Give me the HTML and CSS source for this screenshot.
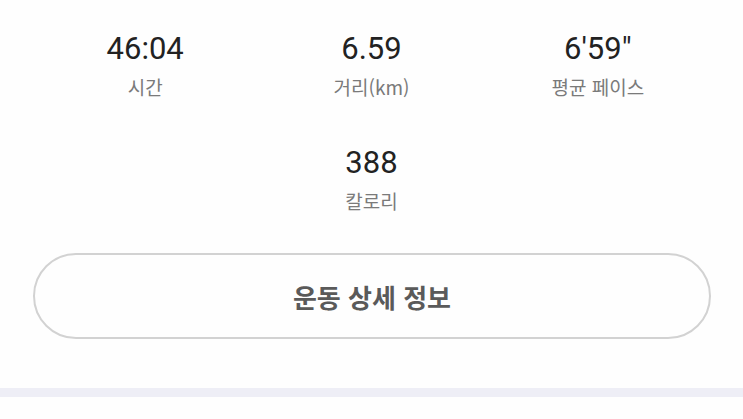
FILE: index.html
```html
<!DOCTYPE html>
<html lang="ko">
<head>
<meta charset="utf-8">
<link rel="stylesheet" href="styles.css">
</head>
<body>
<div class="summary">
  <div class="stats">
    <div class="stat">
      <div class="value">46:04</div>
      <div class="label">시간</div>
    </div>
    <div class="stat">
      <div class="value">6.59</div>
      <div class="label">거리(km)</div>
    </div>
    <div class="stat">
      <div class="value">6'59"</div>
      <div class="label">평균 페이스</div>
    </div>
    <div class="stat stat-center">
      <div class="value">388</div>
      <div class="label">칼로리</div>
    </div>
  </div>
  <button class="detail-btn" type="button">운동 상세 정보</button>
</div>
<div class="divider"></div>
</body>
</html>
```
FILE: styles.css
```css
html, body {
  margin: 0;
  padding: 0;
  background: #fefefe;
}
body {
  width: 743px;
  height: 419px;
  overflow: hidden;
  font-family: Roboto, "Noto Sans CJK KR", sans-serif;
}
.summary {
  padding: 31px 32px 0;
  height: 357px;
  box-sizing: border-box;
}
.stats {
  display: grid;
  grid-template-columns: repeat(3, 1fr);
  row-gap: 45px;
}
.stat {
  display: flex;
  flex-direction: column;
  align-items: center;
}
.stat-center {
  grid-column: 2;
}
.value {
  font-size: 31px;
  line-height: 36px;
  color: #222;
}
.label {
  margin-top: 7px;
  font-family: "Noto Sans CJK KR", sans-serif;
  font-size: 19px;
  line-height: 26px;
  color: #7a7a7a;
}
.detail-btn {
  display: block;
  margin: 39px 0 0 1px;
  width: 678px;
  height: 86px;
  border: 2px solid #d2d2d2;
  border-radius: 43px;
  background: #fefefe;
  font-family: "Noto Sans CJK KR", sans-serif;
  font-size: 26px;
  font-weight: 700;
  color: #5a5a5a;
  padding: 0;
}
.divider {
  margin-top: 31px;
  height: 9px;
  background: #eeeef6;
}
```
